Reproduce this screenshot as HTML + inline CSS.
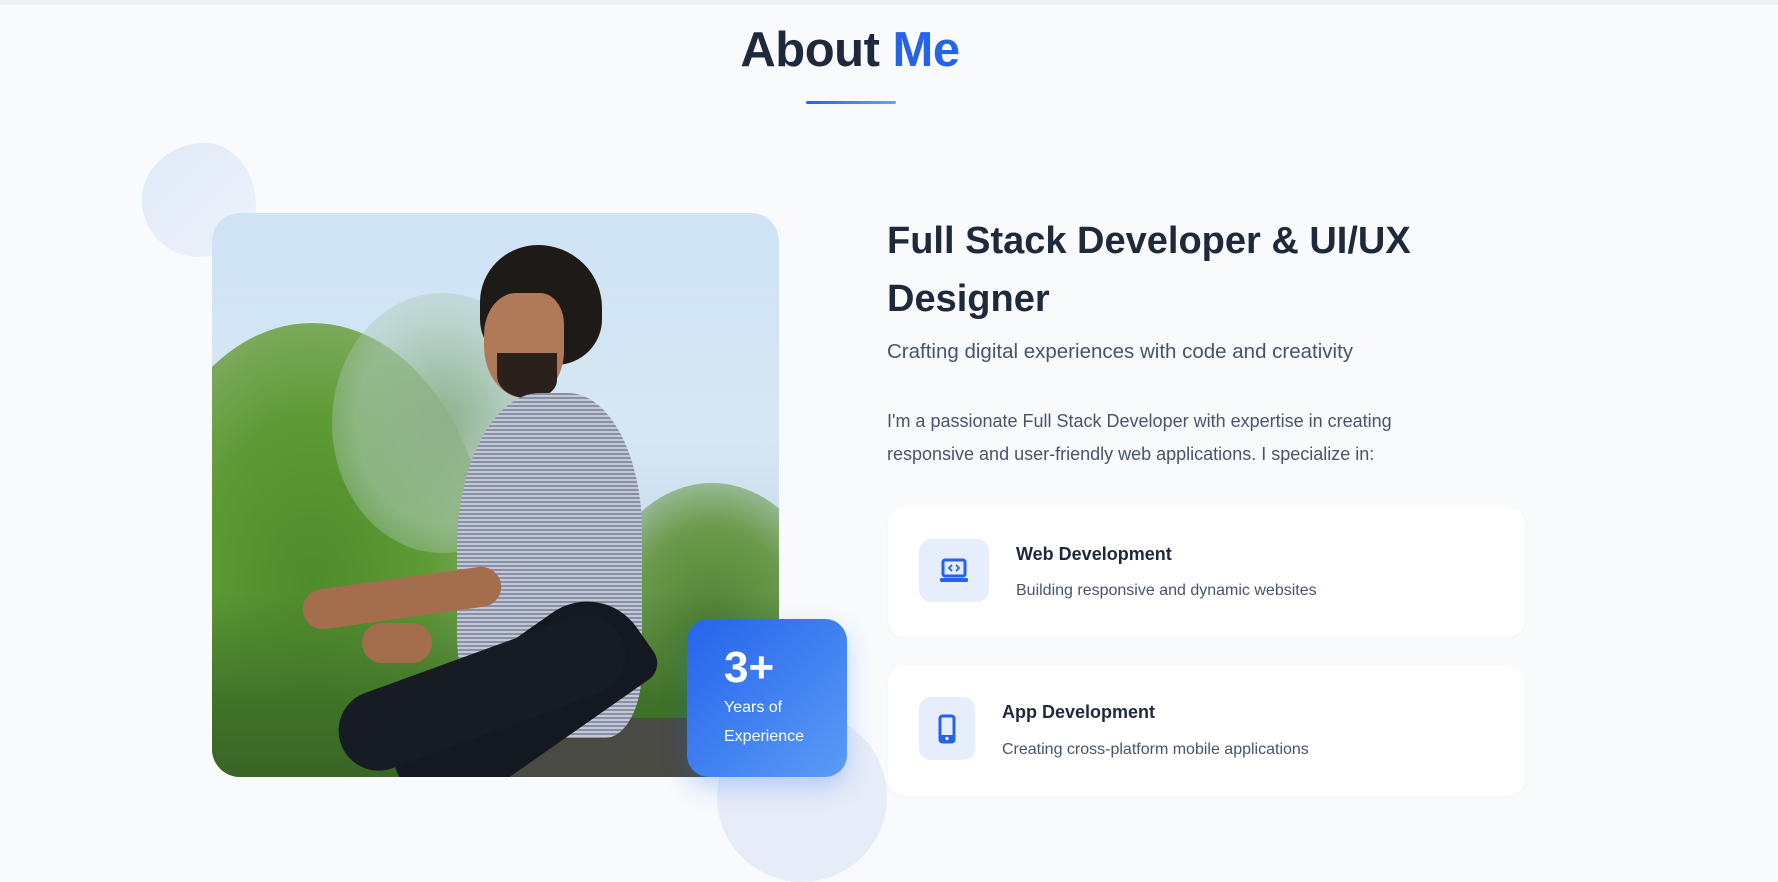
<!DOCTYPE html>
<html><head><meta charset="utf-8"><style>
*{margin:0;padding:0;box-sizing:border-box}
body{width:1778px;height:807px;overflow:hidden;background:#f8fafc;font-family:"Liberation Sans",sans-serif;position:relative}
.topline{position:absolute;left:0;top:0;width:100%;height:5px;background:#eef0f3}
h1{position:absolute;left:0;width:1700px;text-align:center;top:22px;font-size:49px;font-weight:700;color:#1e293b;letter-spacing:-0.5px}
h1 span{color:#2563eb}
.ul{position:absolute;left:806px;top:101px;width:90px;height:3px;background:linear-gradient(90deg,#2563eb,#60a5fa);border-radius:2px}
.blob1{position:absolute;left:142px;top:143px;width:114px;height:114px;border-radius:55% 45% 50% 50%/50% 55% 45% 50%;background:linear-gradient(135deg,#dfe9f8,#eef3fb)}
.blob2{position:absolute;left:717px;top:712px;width:170px;height:170px;border-radius:50%;background:#e6edf8}
.photo{position:absolute;left:212px;top:213px;width:567px;height:564px;border-radius:28px;overflow:hidden;background:linear-gradient(180deg,#cfe3f5 0%,#d6e7f4 40%,#c9dcea 60%)}
.photo div{position:absolute}
.badge{position:absolute;left:687px;top:619px;width:160px;height:158px;border-radius:22px;background:linear-gradient(135deg,#2563eb,#5b9cf6);box-shadow:0 10px 25px rgba(37,99,235,.25);color:#fff;padding:26px 0 0 37px}
.badge b{font-size:44px;display:block;line-height:46px}
.badge p{font-size:16px;line-height:29px;margin-top:2px}
.h2{position:absolute;left:887px;top:212px;font-size:38px;font-weight:700;color:#1e293b;line-height:58px;width:620px}
.sub{position:absolute;left:887px;top:340px;font-size:20.5px;color:#475569}
.para{position:absolute;left:887px;top:405px;font-size:18px;line-height:33px;color:#475569;width:565px}
.card{position:absolute;left:888px;width:637px;height:130px;background:#fff;border-radius:18px;box-shadow:0 2px 8px rgba(0,0,0,.02)}
.ic{position:absolute;left:31px;background:#e6eefc;border-radius:12px;display:flex;align-items:center;justify-content:center}
.ct{position:absolute;font-size:18px;font-weight:700;color:#1e293b}
.cd{position:absolute;font-size:16px;color:#475569}
</style></head><body>
<div class="topline"></div>
<h1>About <span>Me</span></h1>
<div class="ul"></div>
<div class="blob1"></div>
<div class="blob2"></div>
<div class="photo">
 <div style="left:-80px;top:110px;width:360px;height:520px;border-radius:50%;background:radial-gradient(ellipse at 50% 50%,#4f8a2c 0%,#5e9a35 45%,#7aa95a 70%,rgba(150,190,140,0) 100%)"></div>
 <div style="left:120px;top:80px;width:220px;height:260px;border-radius:50%;background:radial-gradient(ellipse,#8fb08a 0%,rgba(170,200,180,.6) 55%,rgba(200,220,230,0) 100%)"></div>
 <div style="left:380px;top:270px;width:240px;height:300px;border-radius:50%;background:radial-gradient(ellipse,#4d7f32 0%,#6b9a4c 50%,rgba(130,170,120,0) 100%)"></div>
 <div style="left:0;top:380px;width:567px;height:184px;background:linear-gradient(180deg,rgba(70,120,40,0),#3f7228 60%,#3a6526)"></div>
 <div style="left:300px;top:505px;width:200px;height:60px;background:#4a4a44;border-radius:8px 8px 0 0"></div>
 <div style="left:268px;top:32px;width:122px;height:120px;border-radius:50% 55% 40% 40%;background:#1e1a18"></div>
 <div style="left:272px;top:80px;width:80px;height:105px;border-radius:40% 30% 45% 50%;background:#b07a58"></div>
 <div style="left:285px;top:140px;width:60px;height:45px;border-radius:0 0 40% 50%;background:#2a211c"></div>
 <div style="left:245px;top:180px;width:185px;height:345px;border-radius:45% 40% 20% 30%;background:repeating-linear-gradient(180deg,#8990a5 0 2px,#c3c8d6 2px 4px)"></div>
 <div style="left:90px;top:365px;width:200px;height:40px;border-radius:20px;transform:rotate(-8deg);background:#a46e4e"></div>
 <div style="left:110px;top:365px;width:280px;height:110px;border-radius:50px 60px 20px 20px;background:#141821;transform:rotate(-35deg);transform-origin:right top"></div>
 <div style="left:120px;top:440px;width:300px;height:80px;border-radius:40px;background:#161b24;transform:rotate(-20deg)"></div>
 <div style="left:150px;top:410px;width:70px;height:40px;border-radius:20px;background:#a46e4e"></div>
</div>
<div class="badge"><b>3+</b><p>Years of<br>Experience</p></div>
<div class="h2">Full Stack Developer &amp; UI/UX Designer</div>
<div class="sub">Crafting digital experiences with code and creativity</div>
<div class="para">I'm a passionate Full Stack Developer with expertise in creating responsive and user-friendly web applications. I specialize in:</div>
<div class="card" style="top:507px">
 <div class="ic" style="top:32px;width:70px;height:63px">
  <svg width="30" height="26" viewBox="0 0 30 26"><rect x="4" y="2" width="22" height="16" rx="2" fill="none" stroke="#2563eb" stroke-width="3"/><rect x="1" y="20" width="28" height="4" rx="1.5" fill="#2563eb"/><path d="M13 7l-3 3 3 3M17 7l3 3-3 3" fill="none" stroke="#2563eb" stroke-width="1.8"/></svg>
 </div>
 <div class="ct" style="left:128px;top:37px">Web Development</div>
 <div class="cd" style="left:128px;top:75px">Building responsive and dynamic websites</div>
</div>
<div class="card" style="top:666px">
 <div class="ic" style="top:31px;width:56px;height:63px">
  <svg width="18" height="30" viewBox="0 0 18 30"><rect x="2" y="2" width="14" height="26" rx="2.5" fill="none" stroke="#2563eb" stroke-width="3"/><rect x="2" y="21" width="14" height="7" fill="#2563eb"/><circle cx="9" cy="24.5" r="1.6" fill="#fff"/></svg>
 </div>
 <div class="ct" style="left:114px;top:36px">App Development</div>
 <div class="cd" style="left:114px;top:75px">Creating cross-platform mobile applications</div>
</div>
</body></html>
